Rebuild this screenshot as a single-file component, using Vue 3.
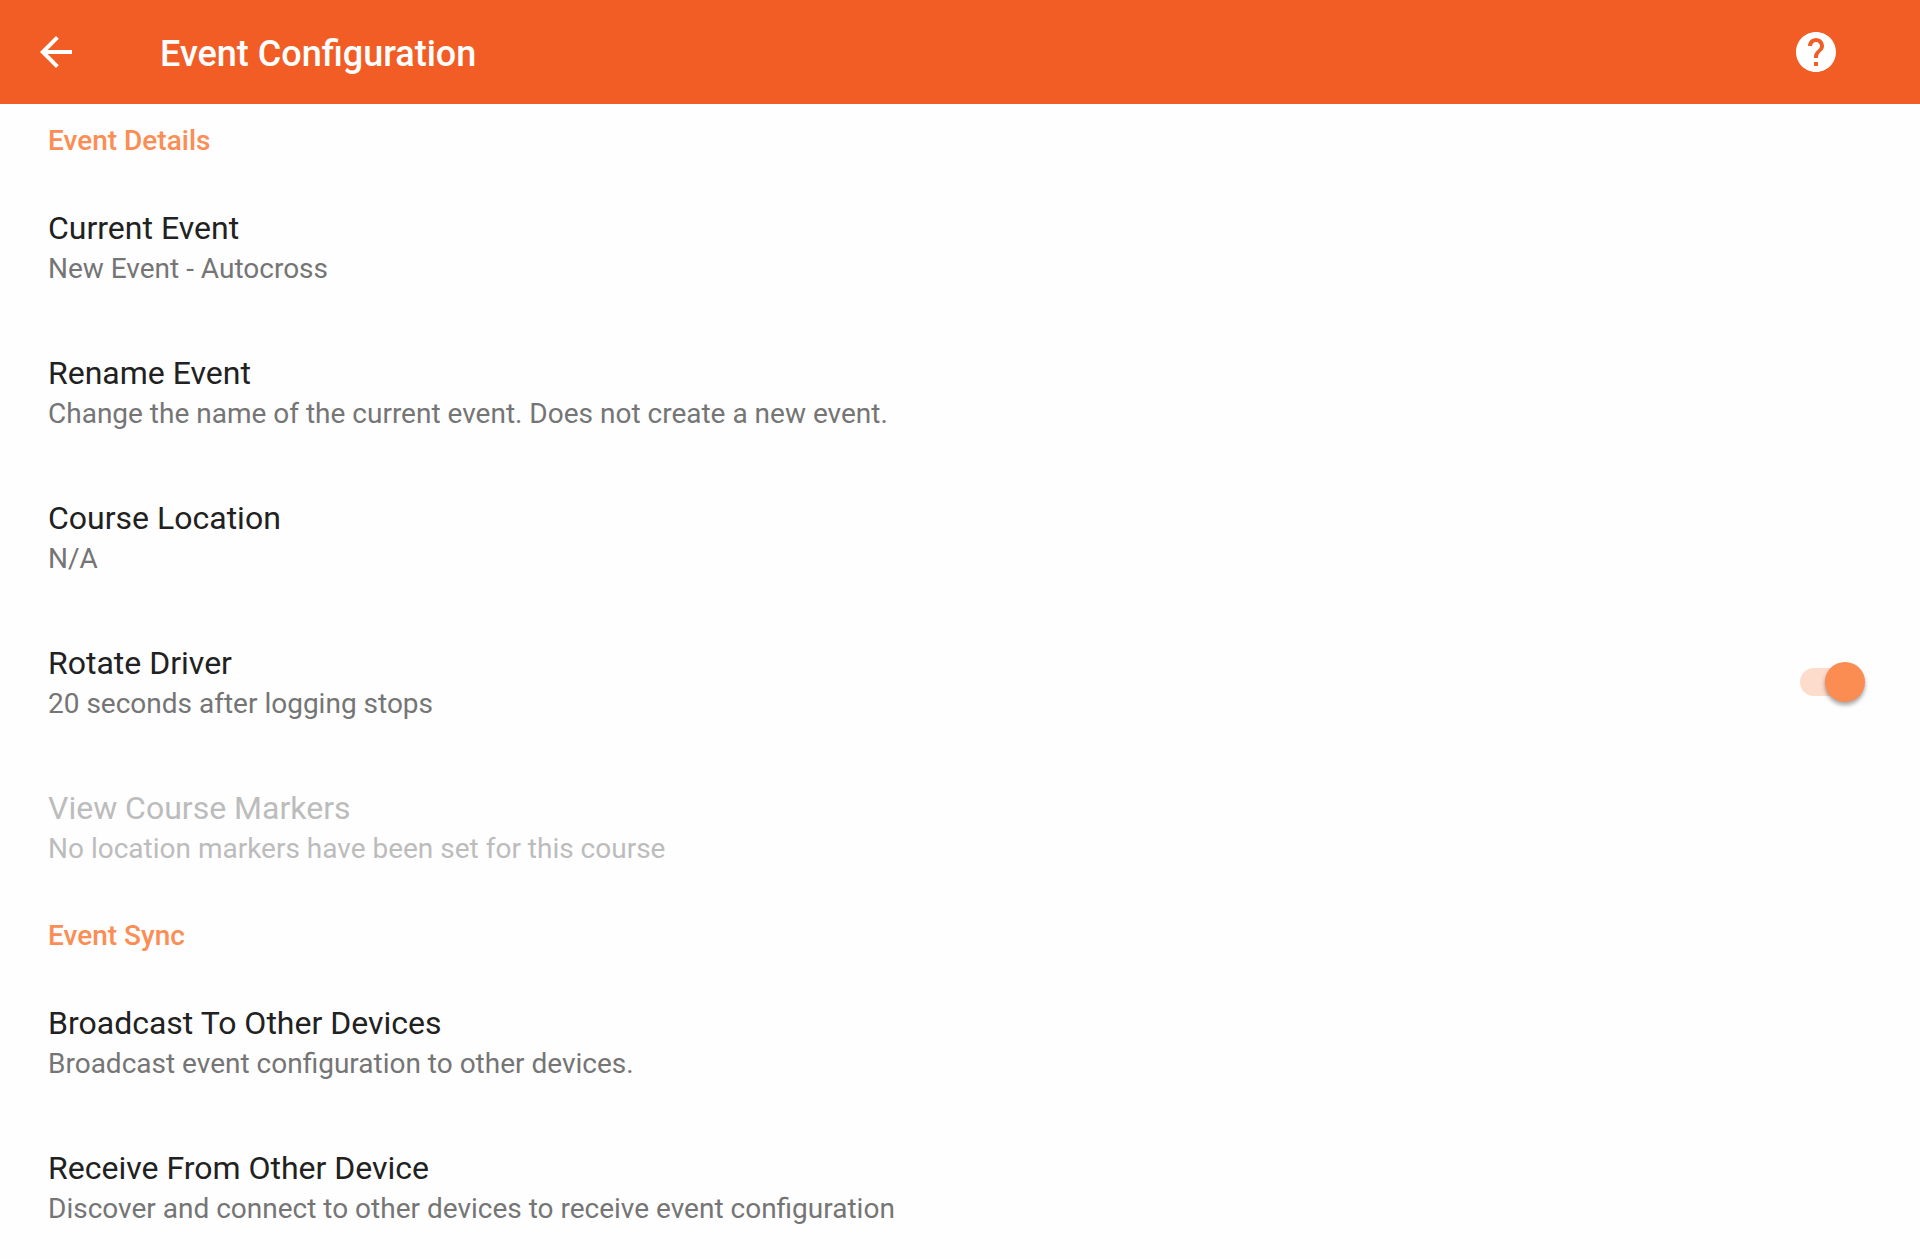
<script setup>
import { ref } from 'vue'

const rotateDriver = ref(true)

const sections = [
  {
    title: 'Event Details',
    items: [
      { title: 'Current Event', summary: 'New Event - Autocross' },
      { title: 'Rename Event', summary: 'Change the name of the current event. Does not create a new event.' },
      { title: 'Course Location', summary: 'N/A' },
      { title: 'Rotate Driver', summary: '20 seconds after logging stops', toggle: true },
      { title: 'View Course Markers', summary: 'No location markers have been set for this course', disabled: true },
    ],
  },
  {
    title: 'Event Sync',
    items: [
      { title: 'Broadcast To Other Devices', summary: 'Broadcast event configuration to other devices.' },
      { title: 'Receive From Other Device', summary: 'Discover and connect to other devices to receive event configuration' },
    ],
  },
]
</script>

<template>
  <div class="screen">
    <header class="app-bar">
      <button class="icon-button" type="button" aria-label="Back">
        <svg viewBox="0 0 24 24" aria-hidden="true">
          <path d="M20 11H7.83l5.59-5.59L12 4l-8 8 8 8 1.41-1.41L7.83 13H20v-2z" />
        </svg>
      </button>
      <h1 class="app-title">Event Configuration</h1>
      <button class="icon-button" type="button" aria-label="Help">
        <svg viewBox="0 0 24 24" aria-hidden="true">
          <path d="M12 2C6.48 2 2 6.48 2 12s4.48 10 10 10 10-4.48 10-10S17.52 2 12 2zm1 17h-2v-2h2v2zm2.07-7.75l-.9.92C13.45 12.9 13 13.5 13 15h-2v-.5c0-1.1.45-2.1 1.17-2.83l1.24-1.26c.37-.36.59-.86.59-1.41 0-1.1-.9-2-2-2s-2 .9-2 2H8c0-2.21 1.79-4 4-4s4 1.79 4 4c0 .88-.36 1.68-.93 2.25z" />
        </svg>
      </button>
    </header>

    <main>
      <section v-for="section in sections" :key="section.title">
        <h2 class="section-title">{{ section.title }}</h2>
        <template v-for="item in section.items" :key="item.title">
          <label v-if="item.toggle" class="preference">
            <span class="preference-text">
              <span class="title">{{ item.title }}</span>
              <span class="summary">{{ item.summary }}</span>
            </span>
            <input v-model="rotateDriver" class="switch" type="checkbox" role="switch" />
          </label>
          <button v-else class="preference" type="button" :disabled="item.disabled">
            <span class="preference-text">
              <span class="title">{{ item.title }}</span>
              <span class="summary">{{ item.summary }}</span>
            </span>
          </button>
        </template>
      </section>
    </main>
  </div>
</template>

<style>
body {
  margin: 0;
  background: #fefefe;
}
</style>

<style scoped>
.screen {
  font-family: Roboto, sans-serif;
  color: #212121;
}

.app-bar {
  display: flex;
  align-items: center;
  box-sizing: border-box;
  height: 104px;
  padding: 0 80px 0 32px;
  background: #f25d25;
  color: #fff;
}

.icon-button {
  display: flex;
  padding: 0;
  border: 0;
  background: none;
  color: inherit;
  cursor: pointer;
}

.icon-button svg {
  display: block;
  width: 48px;
  height: 48px;
  fill: currentColor;
}

.app-title {
  flex: 1;
  margin: 0;
  padding: 4px 0 0 80px;
  font-size: 36px;
  line-height: 48px;
  font-weight: 500;
}

.section-title {
  margin: 0;
  padding: 20px 48px 17px;
  font-size: 28px;
  line-height: 33px;
  font-weight: 500;
  color: #fc8d54;
}

.preference {
  display: flex;
  align-items: center;
  box-sizing: border-box;
  width: 100%;
  min-height: 145px;
  padding: 0 48px;
  border: 0;
  background: none;
  color: inherit;
  font: inherit;
  text-align: left;
  cursor: pointer;
}

.preference-text {
  flex: 1;
  padding-top: 5px;
}

.title,
.summary {
  display: block;
}

.title {
  font-size: 32px;
  line-height: 40px;
}

.summary {
  font-size: 28px;
  line-height: 42px;
  color: #757575;
}

.preference:disabled {
  cursor: default;
}

.preference:disabled .title,
.preference:disabled .summary {
  color: #bcbcbc;
}

.switch {
  position: relative;
  appearance: none;
  width: 72px;
  height: 40px;
  margin: 0;
  cursor: pointer;
}

.switch::before {
  content: '';
  position: absolute;
  inset: 6px 8px 6px 0;
  border-radius: 14px;
  background: #d0d0d0;
}

.switch::after {
  content: '';
  position: absolute;
  top: 0;
  left: 0;
  width: 40px;
  height: 40px;
  border-radius: 50%;
  background: #fafafa;
  box-shadow: 0 3px 4px rgba(0, 0, 0, 0.35);
}

.switch:checked::before {
  background: #fddccc;
}

.switch:checked::after {
  left: 25px;
  background: #fb8c52;
}
</style>
